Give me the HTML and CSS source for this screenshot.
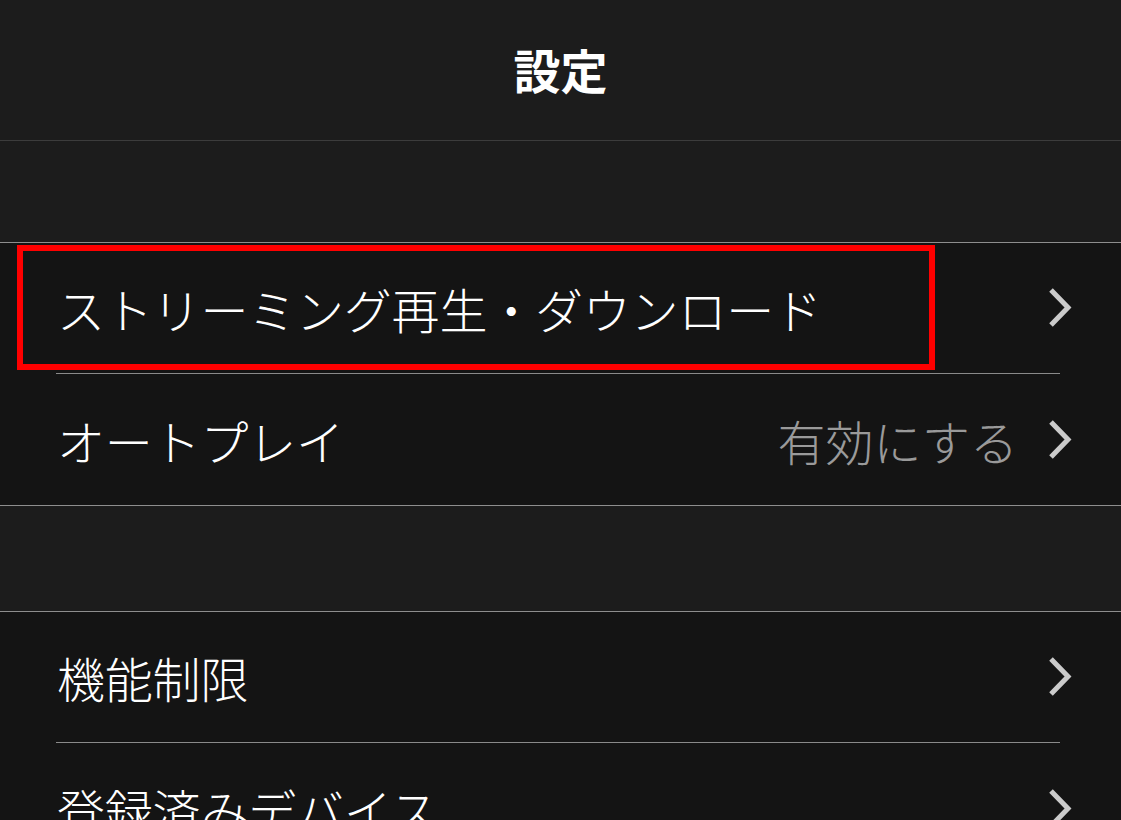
FILE: index.html
```html
<!DOCTYPE html>
<html lang="ja">
<head>
<meta charset="utf-8">
<title>設定</title>
<link rel="stylesheet" href="styles.css">
</head>
<body>
<header class="header"><h1 class="title">設定</h1></header>
<div class="spacer spacer-top"></div>
<section class="group">
  <div class="row row-highlight">
    <span class="label">ストリーミング再生・ダウンロード</span>
    <svg class="chev" viewBox="0 0 24 40" width="24" height="40"><polyline points="3,2 20,19.5 3,37" /></svg>
    <div class="focus-box"></div>
  </div>
  <div class="sep"></div>
  <div class="row">
    <span class="label">オートプレイ</span>
    <span class="value">有効にする</span>
    <svg class="chev" viewBox="0 0 24 40" width="24" height="40"><polyline points="3,2 20,19.5 3,37" /></svg>
  </div>
</section>
<div class="spacer spacer-mid"></div>
<section class="group">
  <div class="row">
    <span class="label">機能制限</span>
    <svg class="chev" viewBox="0 0 24 40" width="24" height="40"><polyline points="3,2 20,19.5 3,37" /></svg>
  </div>
  <div class="sep"></div>
  <div class="row">
    <span class="label">登録済みデバイス</span>
    <svg class="chev" viewBox="0 0 24 40" width="24" height="40"><polyline points="3,2 20,19.5 3,37" /></svg>
  </div>
</section>
</body>
</html>
```
FILE: styles.css
```css
html, body {
  margin: 0;
  padding: 0;
  background: #1c1c1c;
  font-family: "Noto Sans CJK JP", "Noto Sans", sans-serif;
  color: #ffffff;
  overflow: hidden;
}
.header {
  height: 140px;
  border-bottom: 1px solid #3c3c3c;
  display: flex;
  align-items: center;
  justify-content: center;
}
.title {
  margin: 0;
  font-size: 47px;
  font-weight: 700;
  line-height: 1;
  color: #ffffff;
  padding-bottom: 4px;
}
.spacer {
  background: #1c1c1c;
  border-bottom: 1px solid #8e8e8e;
}
.spacer-top { height: 101px; }
.spacer-mid { height: 105px; }
.group {
  background: #141414;
  border-bottom: 1px solid #8e8e8e;
}
.row {
  position: relative;
  height: 130px;
  display: flex;
  align-items: center;
  padding: 0 49px 0 57px;
}
.label {
  flex: 1;
  font-size: 48px;
  font-weight: 300;
  line-height: 1;
  color: #ffffff;
  white-space: nowrap;
  letter-spacing: -0.2px;
}
.value {
  font-size: 48px;
  font-weight: 300;
  line-height: 1;
  color: #9a9a9a;
  margin-right: 30px;
  white-space: nowrap;
}
.chev {
  flex: none;
  display: block;
}
.chev polyline {
  fill: none;
  stroke: #cbcbcb;
  stroke-width: 5;
  stroke-linecap: butt;
  stroke-linejoin: miter;
}
.sep {
  height: 1px;
  background: #8a8a8a;
  margin: 0 61px 0 56px;
}
.row + .sep + .row { height: 131px; }
.focus-box {
  position: absolute;
  left: 17px;
  top: 2px;
  width: 918px;
  height: 125px;
  box-sizing: border-box;
  border: 6px solid #ff0000;
  pointer-events: none;
}
```
